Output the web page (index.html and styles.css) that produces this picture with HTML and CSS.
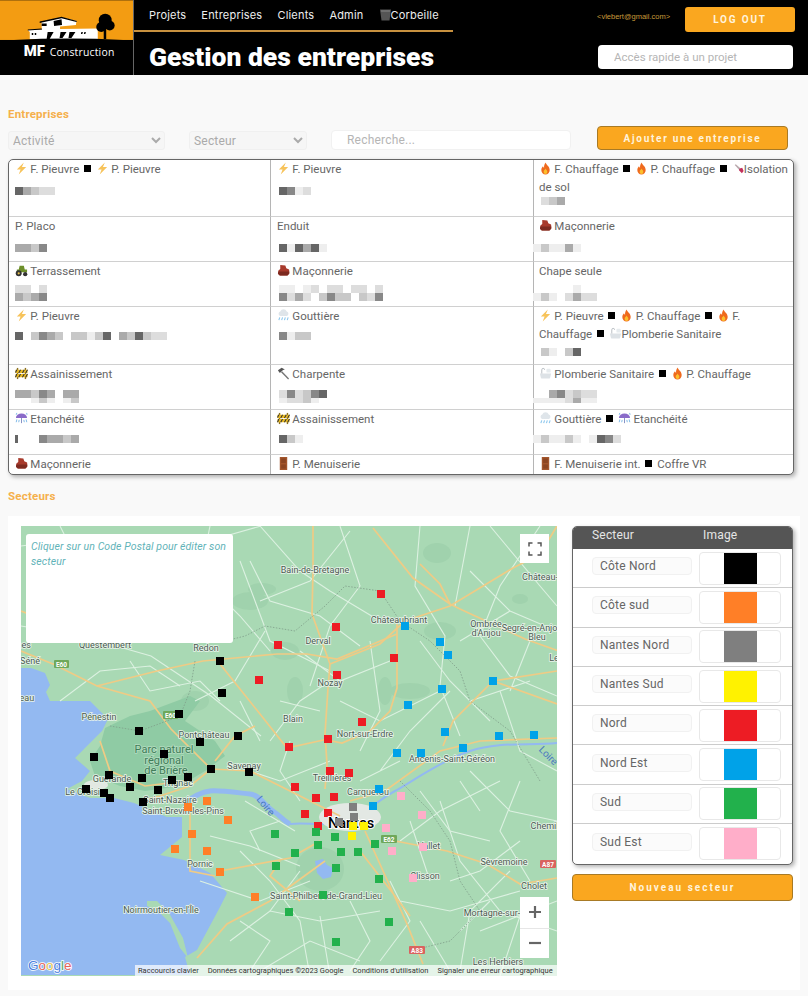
FILE: index.html
```html
<!DOCTYPE html>
<html lang="fr">
<head>
<meta charset="utf-8">
<title>Gestion des entreprises</title>
<link rel="stylesheet" href="styles.css">
</head>
<body>
<svg class="sprite" aria-hidden="true">
  <symbol id="i-bolt" viewBox="0 0 14 14"><path d="M9.5 0.5 2 8h4l-2 5.5L12 5.5H7.5z" fill="#f7c35a"/></symbol>
  <symbol id="i-fire" viewBox="0 0 14 14"><path d="M7 0.5c.6 2.500 4.500 4 4.500 8a4.500 5 0 0 1-9 0c0-2 1-3 1.800-4 .2 1 .6 1.500 1.200 1.800C5.200 4 6 2 7 .5z" fill="#ef6a1d"/><path d="M7 7c.4 1.200 2 1.800 2 3.500a2 2.500 0 0 1-4 0C5 9 6.500 8.500 7 7z" fill="#fbc02d"/></symbol>
  <symbol id="i-brick" viewBox="0 0 14 14"><path d="M3.500 1 9 1.500l1 3 3 1.500.5 4-2 2.500H3L1 10.500 1.500 7l2-1.500z" fill="#a83a2c"/><path d="M1.500 8h11.500v2.500l-2 2H3l-2-2z" fill="#7d2a20"/></symbol>
  <symbol id="i-tractor" viewBox="0 0 14 14"><path d="M5 2h4.500l1 4H13v3H2V6h2z" fill="#6d8f2a"/><circle cx="4" cy="10" r="3.200" fill="#333"/><circle cx="4" cy="10" r="1.200" fill="#e9c04a"/><circle cx="11" cy="11" r="2.300" fill="#333"/></symbol>
  <symbol id="i-rain" viewBox="0 0 14 14"><path d="M3.500 7.500a2.500 2.500 0 0 1 0-4.800 3.800 3.800 0 0 1 7 0 2.500 2.500 0 0 1 0 4.800z" fill="#dfe5ea"/><path d="M3 9l-1 3M6 9l-1 3M9 9l-1 3M12 9l-1 3" stroke="#8ec8ee" stroke-width="1.200" fill="none"/></symbol>
  <symbol id="i-bath" viewBox="0 0 14 14"><path d="M1 7h12l-1 4.500a1.500 1.500 0 0 1-1.500 1h-7A1.500 1.500 0 0 1 2 11.500z" fill="#dde2e6"/><path d="M3 7V3a1.500 1.500 0 0 1 3 0" fill="none" stroke="#b4babf" stroke-width="1"/><rect x="8" y="2" width="4.500" height="4" rx="1" fill="#e6ebee"/></symbol>
  <symbol id="i-barrier" viewBox="0 0 14 14"><rect x="2" y="1" width="1.500" height="12" fill="#8a6d1e"/><rect x="10.500" y="1" width="1.500" height="12" fill="#8a6d1e"/><rect x="0.500" y="3" width="13" height="3.500" fill="#e8b923"/><rect x="0.500" y="7.500" width="13" height="3.500" fill="#e8b923"/><path d="M2 3 .5 6M6 3 4 6.500M10 3 8 6.500M13.500 3l-2 3.500M2 7.500.5 11M6 7.500 4 11M10 7.500 8 11M13.500 7.500l-2 3.500" stroke="#333" stroke-width="1.100"/></symbol>
  <symbol id="i-hammer" viewBox="0 0 14 14"><path d="M5.500 4.500 13 12.500l-1 1L4.300 5.700z" fill="#777"/><path d="M1 3.500 5 .8l3.500 2-2 .5-2.800 2.700-1 .2z" fill="#555"/></symbol>
  <symbol id="i-umbrella" viewBox="0 0 14 14"><path d="M1 6.500a6 5 0 0 1 12 0z" fill="#8a6bc9"/><path d="M7 6.500V12" stroke="#7e8ac0" stroke-width="1"/><path d="M2 1l-.7 2M12.500 1l.5 2M2 8l-.7 3M12 8l.7 3M4.500 8.500l-.5 2.500M9.500 8.500l.5 2.500" stroke="#79b6e6" stroke-width="1"/></symbol>
  <symbol id="i-door" viewBox="0 0 14 14"><rect x="3" y="0" width="8" height="14" fill="#a3562c"/><rect x="4.500" y="1.500" width="5" height="5" fill="#8b4522"/><rect x="4.500" y="8" width="5" height="4.500" fill="#8b4522"/></symbol>
  <symbol id="i-iso" viewBox="0 0 14 14"><path d="M1 2l1.500-1L11 8.500 9 11z" fill="#b9a9ad"/><path d="M7.500 7.500l4-1.500 2 4.500-2.500 3-4-4z" fill="#c3305c"/></symbol>
</svg>

<header class="topbar">
  <div class="logo">
    <svg class="logo-art" viewBox="0 0 134 75" role="img" aria-label="MF Construction">
      <rect width="134" height="40" fill="#f39c12"/>
      <rect y="40" width="134" height="35" fill="#000"/>
      <path d="M28 30l14-.5V22l20-5 15 4-.500 4-16 1.500V29l38-.5V39H30V32z" fill="#fff"/>
      <path d="M54 21l8-2 .5 6-8 1zM40 21.500l22-5 15.500 4.300-.5 1-15-3.800-22 5zM28 29.500l14-1 .5 1-14.500 1z" fill="#000"/>
      <path d="M47 39l1-7h6l-4 7zM60 38l1-6h6l-4 6zM69 38l1-6h6l-4 6zM32 33h1.500v2H32zM35 33h1.500v2H35zM82 32h1.500l-.5 2H81.500zM85 32h1.500l-.5 2h-1.500zM42 23.500h5v2.500h-5z" fill="#000"/>
      <circle cx="106" cy="20" r="6.500" fill="#000"/><circle cx="110.500" cy="25.500" r="5" fill="#000"/><circle cx="102" cy="27" r="5" fill="#000"/>
      <rect x="104.500" y="27" width="2.500" height="12" fill="#000"/>
      <path d="M14 40q55-3 110 0z" fill="#000"/>
      <text class="logo-mf" x="24" y="56">MF</text>
      <text class="logo-c" x="50" y="56">Construction</text>
    </svg>
  </div>
  <div class="head-mid">
    <nav class="nav">
      <a>Projets</a><a>Entreprises</a><a>Clients</a><a>Admin</a>
      <a class="nav-trash"><svg class="trash" viewBox="0 0 11 12"><path d="M0 .5h11l-1.500 11h-8z" fill="#555"/><path d="M1 2h9" stroke="#888"/></svg>Corbeille</a>
    </nav>
    <h1>Gestion des entreprises</h1>
  </div>
  <div class="head-right">
    <div class="account"><span class="email">&lt;vlebert@gmail.com&gt;</span><button class="logout">LOG OUT</button></div>
    <input class="quick" placeholder="Accès rapide à un projet">
  </div>
</header>

<main class="main">
  <h2>Entreprises</h2>
  <div class="filters">
    <select class="sel sel-a"><option>Activité</option></select>
    <select class="sel sel-b"><option>Secteur</option></select>
    <input class="search" placeholder="Recherche...">
    <button class="add">Ajouter une entreprise</button>
  </div>

  <div class="grid">
    <div class="cell"><svg class="ic"><use href="#i-bolt"/></svg> F. Pieuvre <i class="sq"></i> <svg class="ic"><use href="#i-bolt"/></svg> P. Pieuvre
      <div class="mos"><div class="mr"><b class="g6"></b><b class="g4"></b><b class="g3"></b><b class="g2"></b><b class="g2"></b></div></div></div>
    <div class="cell c2"><svg class="ic"><use href="#i-bolt"/></svg> F. Pieuvre
      <div class="mos"><div class="mr"><b class="g6"></b><b class="g5"></b><b class="g1"></b><b class="g2"></b></div></div></div>
    <div class="cell c3"><svg class="ic"><use href="#i-fire"/></svg> F. Chauffage <i class="sq"></i> <svg class="ic"><use href="#i-fire"/></svg> P. Chauffage <i class="sq"></i> <svg class="ic ic-n"><use href="#i-iso"/></svg>Isolation de sol
      <div class="mos mos-tiny"><div class="mr"><b class="g2"></b><b class="g3"></b><b class="g4"></b></div></div></div>

    <div class="cell">P. Placo
      <div class="mos"><div class="mr"><b class="g4"></b><b class="g4"></b><b class="g3"></b><b class="g5"></b></div></div></div>
    <div class="cell c2">Enduit
      <div class="mos"><div class="mr"><b class="g6"></b><b class="g1"></b><b class="g6"></b><b class="g4"></b><b class="g6"></b><b class="g1"></b></div></div></div>
    <div class="cell c3"><svg class="ic"><use href="#i-brick"/></svg> Maçonnerie
      <div class="mos"><div class="mr"><b class="g1"></b><b class="g3"></b><b class="g1"></b><b class="g1"></b><b class="g4"></b><b class="g1"></b></div></div></div>

    <div class="cell"><svg class="ic"><use href="#i-tractor"/></svg> Terrassement
      <div class="mos mos-up"><div class="mr"><b class="g2"></b><b class="g2"></b><b></b><b class="g2"></b></div><div class="mr"><b class="g4"></b><b class="g3"></b><b class="g4"></b><b class="g5"></b></div></div></div>
    <div class="cell c2"><svg class="ic"><use href="#i-brick"/></svg> Maçonnerie
      <div class="mos mos-up"><div class="mr"><b class="g1"></b><b class="g1"></b><b></b><b class="g1"></b><b class="g2"></b><b></b><b class="g2"></b><b class="g2"></b><b></b><b class="g2"></b><b class="g2"></b><b></b><b class="g2"></b></div><div class="mr"><b class="g5"></b><b class="g2"></b><b class="g4"></b><b class="g2"></b><b></b><b class="g3"></b><b class="g5"></b><b class="g3"></b><b class="g3"></b><b></b><b class="g3"></b><b class="g2"></b><b class="g5"></b></div></div></div>
    <div class="cell c3">Chape seule
      <div class="mos mos-up"><div class="mr"><b></b><b></b><b></b><b></b><b></b><b class="g1"></b></div><div class="mr"><b class="g1"></b><b class="g3"></b><b class="g1"></b><b></b><b class="g2"></b><b class="g4"></b><b class="g2"></b><b class="g2"></b></div></div></div>

    <div class="cell"><svg class="ic"><use href="#i-bolt"/></svg> P. Pieuvre
      <div class="mos mos-m"><div class="mr"><b class="g6"></b><b></b><b class="g3"></b><b class="g5"></b><b class="g4"></b><b class="g3"></b><b></b><b class="g3"></b><b class="g3"></b><b class="g1"></b><b class="g3"></b><b class="g6"></b><b></b><b class="g4"></b><b class="g3"></b><b class="g6"></b><b class="g3"></b><b class="g2"></b><b class="g2"></b></div></div></div>
    <div class="cell c2"><svg class="ic"><use href="#i-rain"/></svg> Gouttière
      <div class="mos mos-m"><div class="mr"><b class="g5"></b><b class="g1"></b><b class="g3"></b><b class="g3"></b></div></div></div>
    <div class="cell c3"><svg class="ic"><use href="#i-bolt"/></svg> P. Pieuvre <i class="sq"></i> <svg class="ic"><use href="#i-fire"/></svg> P. Chauffage <i class="sq"></i> <svg class="ic"><use href="#i-fire"/></svg> F. Chauffage <i class="sq"></i> <svg class="ic"><use href="#i-bath"/></svg>Plomberie Sanitaire
      <div class="mos mos-low"><div class="mr"><b></b><b class="g3"></b><b class="g1"></b><b></b><b class="g3"></b><b class="g6"></b></div></div></div>

    <div class="cell"><svg class="ic"><use href="#i-barrier"/></svg> Assainissement
      <div class="mos mos-m"><div class="mr"><b class="g4"></b><b class="g4"></b><b class="g3"></b><b class="g5"></b><b class="g4"></b><b></b><b class="g4"></b><b class="g4"></b></div><div class="mr mr-h"><b></b><b></b><b class="g1"></b><b class="g3"></b><b class="g1"></b><b></b><b class="g1"></b><b class="g3"></b></div></div></div>
    <div class="cell c2"><svg class="ic"><use href="#i-hammer"/></svg> Charpente
      <div class="mos mos-m"><div class="mr"><b class="g2"></b><b class="g5"></b><b class="g2"></b><b class="g3"></b><b class="g5"></b><b class="g6"></b></div><div class="mr mr-h"><b class="g1"></b><b class="g2"></b><b class="g2"></b><b class="g3"></b><b class="g1"></b><b></b></div></div></div>
    <div class="cell c3"><svg class="ic"><use href="#i-bath"/></svg> Plomberie Sanitaire <i class="sq"></i> <svg class="ic"><use href="#i-fire"/></svg> P. Chauffage
      <div class="mos mos-m"><div class="mr"><b></b><b></b><b class="g4"></b><b class="g5"></b><b class="g2"></b><b class="g3"></b><b class="g2"></b><b class="g2"></b></div><div class="mr mr-h"><b class="g1"></b><b class="g1"></b><b class="g1"></b><b class="g1"></b><b class="g2"></b><b class="g4"></b><b class="g1"></b><b class="g1"></b></div></div></div>

    <div class="cell"><svg class="ic"><use href="#i-umbrella"/></svg> Etanchéité
      <div class="mos mos-m"><div class="mr"><b class="g6 thin"></b><b></b><b></b><b class="g5"></b><b class="g4"></b><b class="g4"></b><b class="g3"></b><b class="g4"></b></div></div></div>
    <div class="cell c2"><svg class="ic"><use href="#i-barrier"/></svg> Assainissement
      <div class="mos mos-m"><div class="mr"><b class="g6"></b><b class="g3"></b><b class="g1"></b></div></div></div>
    <div class="cell c3"><svg class="ic"><use href="#i-rain"/></svg> Gouttière <i class="sq"></i> <svg class="ic"><use href="#i-umbrella"/></svg> Etanchéité
      <div class="mos mos-m"><div class="mr"><b class="g1"></b><b class="g3"></b><b class="g1"></b><b class="g1"></b><b class="g3"></b><b class="g1"></b><b></b><b class="g1"></b><b class="g6"></b><b class="g5"></b><b class="g2"></b></div></div></div>

    <div class="cell"><svg class="ic"><use href="#i-brick"/></svg> Maçonnerie</div>
    <div class="cell c2"><svg class="ic"><use href="#i-door"/></svg> P. Menuiserie</div>
    <div class="cell c3"><svg class="ic"><use href="#i-door"/></svg> F. Menuiserie int. <i class="sq"></i> Coffre VR</div>
  </div>

  <h2 class="h2-sect">Secteurs</h2>
  <section class="panel">
    <div class="map">
      <svg class="map-art" viewBox="21 525 536 450" role="img" aria-label="Carte">
        <rect x="21" y="525" width="536" height="450" fill="#a9d9b4"/>
        <g fill="#a0d2ad">
          <ellipse cx="250" cy="600" rx="18" ry="9"/><ellipse cx="437" cy="552" rx="14" ry="10"/><ellipse cx="440" cy="630" rx="16" ry="9"/><ellipse cx="410" cy="690" rx="20" ry="8"/><ellipse cx="385" cy="690" rx="7" ry="14"/><ellipse cx="295" cy="690" rx="8" ry="14"/><ellipse cx="262" cy="588" rx="14" ry="6"/><ellipse cx="195" cy="700" rx="14" ry="10"/><ellipse cx="320" cy="868" rx="24" ry="22"/><ellipse cx="520" cy="598" rx="8" ry="5"/><ellipse cx="285" cy="650" rx="14" ry="9"/>
        </g>
        <path d="M105 727l25-12 20-5 40-15 10 5-15 20 30 20 10 15-20 15-25 15-35 5-25-5-25-10-5-15 10-15z" fill="#8fcba4"/>
        <path d="M21 667h10l14 5 5 12-4 7 4 9h40l18 18-6 12-17 17-10 10 15 13-8 10-15 8 23 9h24l20 5 33 14h15v20l-22 18 24 5 26 13 17 20-7 14-23 43-12 7 5 18H21z" fill="#93b9f1"/>
        <path d="M147 900l10 0 12 12 14 25 5 20-8-10-10-25-12-12-11-5z" fill="#a9d9b4"/>
        <path d="M183 803c8-6 18-12 27-13s30 2 40 3 15 12 23 17 10 10 17 13" fill="none" stroke="#93b9f1" stroke-width="5"/>
        <path d="M290 823c20-2 40 4 60-5s30-20 45-28 45-30 75-40 60-5 87-8" fill="none" stroke="#93b9f1" stroke-width="2"/>
        <path d="M315 860l8-2 4 6 6 3-2 9-8 2-6-6z" fill="#93b9f1"/>
        <ellipse cx="350" cy="816" rx="31" ry="14" fill="#e3e8e4"/>
        <ellipse cx="96" cy="784" rx="12" ry="5" fill="#e2e8e2"/>
        <g class="roads-w">
          <path d="M21 545l60-8 60 15 60-10 60-17M60 525l30 60 40 40 60 10M150 540l30 60-20 40M210 525l-10 50 40 40 30 35M260 525l40 45 30 20 50 30M340 525l20 60-30 40-20 60M420 525l-5 60 30 50 -5 50 20 50M470 525l-15 80M490 525l50 60 17 20M470 570l40 40 47 20M540 525l-40 60-20 50 30 40 47 20M420 640l30 40 40 40M370 640l10 70-20 40M450 690l-40 40-30 40M500 690l20 60 37 20M265 630l-30 50-40 20M240 560l30 80 60 30M21 625l60 10 70 20 60 40 50 40M60 700l40-30 50-5 30 20M130 660l20 30 50-10 20 20M270 740l30-40 30-20M250 770l30 10 50-20M300 800l-20-30 10-30M400 760l-40 20M500 780l-60 30-40 30M470 770l40 40 47 10M440 800l20 60 40 50 57 20M520 780l-20 50 30 50M400 900l50 10 70-20M380 960l30-40-20-40M430 880l-20-60M460 970l10-60 40-40M240 850l30 30 30 40 10 55M200 880l60 20 50-20M230 940l40-30 50 10 60-10M260 970l50-30 50 20M330 975l-10-60M480 930l77-30M500 975l20-60M245 800l50 30M210 835l40 10 50 20"/>
          <path d="M250 560l20 40 50 15 40 30M350 530l-40 50-50 20M300 650l40 30 50-20M340 700l40 20 60-30M460 640l50-30M470 700l60-20M530 640l-20 50M280 700l40 10M240 700l20 40M420 790l30 40 40 10M460 780l20 30M520 840l-40 30-30 10M260 850l-10-20 30-10M240 920l30 20 -20 30M420 920l30 50M350 900l20 40-20 30M490 900l-30 30M300 870l-30 40"/>
        </g>
        <g class="roads-y">
          <path d="M313 525v45l-1 43 18 50-2 24-3 46 2 30-2 25"/>
          <path d="M397 623v64l-7 23-20 20-28 12-15-3M405 620l45-15 63-38 27-14 17-28"/>
          <path d="M373 527l40 50 37 26 10 5 65 30 42 15M493 680l64-10M493 680l64 23M493 680l-40 40-10 25"/>
          <path d="M350 800l35-10 55-40 40-10 77-3"/>
          <path d="M385 838l62 12 40 13 33 20 37-6M365 830l42 93 16 40M360 850l35 45 15 20"/>
          <path d="M340 815l-50-25-40-20-39-2-21 17-30 10-20 5M211 768l-40-40-21-28-53-15-44-22-32-13"/>
          <path d="M97 685l60-15 46-10 74-7 30 0 30 5 60-25"/>
          <path d="M220 663l40 50 27 34 41-9M215 760l20-25 20-10"/>
          <path d="M320 840l-30 17-70 13M325 860l-55 40-43 23-30 34M190 810v60l25 5"/>
          <path d="M100 740l10 30 35 15 40-5M300 900l-30-25 10-15M21 610l40 15 40 5"/>
          <path d="M450 603l-10-20-20-20M330 663l50-20 25-23"/>
        </g>
        <g class="borders">
          <path d="M225 640l20-5 20-10 30 5 30-25 20-20 35 5 20 30 30 20 30 30 10 30 40 30 30 50M400 780l30 30 20 30 10 40 20 30-30 30-40 10"/>
          <path d="M195 660l-5 30-10 25-40 15-30-5"/>
        </g>
        <g class="shield">
          <rect x="54" y="659" width="15" height="8" rx="1"/><rect x="163" y="710" width="15" height="8" rx="1"/><rect x="381" y="834" width="16" height="8" rx="1"/>
        </g>
        <g class="shield-t">
          <text x="61.500" y="666">E60</text><text x="170.500" y="717">E60</text><text x="389" y="841">E62</text>
        </g>
        <g class="shield-r">
          <rect x="540" y="859" width="16" height="8" rx="1"/><rect x="409" y="945" width="16" height="8" rx="1"/>
        </g>
        <g class="shield-t">
          <text x="548" y="866">A87</text><text x="417" y="952">A83</text>
        </g>
        <g class="lbl">
          <text x="315" y="572">Bain-de-Bretagne</text><text x="399" y="622">Châteaubriant</text><text x="486" y="626">Ombrée</text><text x="486" y="635">d'Anjou</text><text x="532" y="630">Segré-en-Anjou</text><text x="537" y="639">Bleu</text><text x="540" y="579">Château-</text><text x="318" y="643">Derval</text><text x="330" y="685">Nozay</text><text x="293" y="721">Blain</text><text x="365" y="736">Nort-sur-Erdre</text><text x="452" y="761">Ancenis-Saint-Géréon</text><text x="206" y="650">Redon</text><text x="105" y="647">Questembert</text><text x="99" y="719">Pénestin</text><text x="204" y="737">Pontchâteau</text><text x="244" y="768">Savenay</text><text x="112" y="781">Guérande</text><text x="85" y="794">Le Croisic</text><text x="178" y="785">Trignac</text><text x="170" y="802">Saint-Nazaire</text><text x="183" y="813">Saint-Brevin-les-Pins</text><text x="200" y="866">Pornic</text><text x="161" y="912">Noirmoutier-en-l'Île</text><text x="326" y="898">Saint-Philbert-de-Grand-Lieu</text><text x="332" y="780">Treillières</text><text x="368" y="794">Carquefou</text><text x="429" y="848">Vallet</text><text x="425" y="878">Clisson</text><text x="504" y="864">Sèvremoine</text><text x="534" y="888">Cholet</text><text x="503" y="915">Mortagne-sur-Sèvre</text><text x="498" y="964">Les Herbiers</text><text x="548" y="828">Chemillé</text><text x="554" y="660">Le</text><text x="16" y="647">Vannes</text><text x="30" y="663">Séné</text><text x="18" y="700">Sarzeau</text>
        </g>
        <g class="lbl lbl-park"><text x="164" y="752">Parc naturel</text><text x="164" y="763">régional</text><text x="166" y="773">de Brière</text></g>
        <text class="lbl-water" transform="translate(263 807) rotate(50)">Loire</text>
        <text class="lbl-water" transform="translate(546 757) rotate(45)">Loire</text>
        <g fill="#000">
          <rect x="216" y="656" width="8" height="8"/><rect x="218" y="688" width="8" height="8"/><rect x="175" y="709" width="8" height="8"/><rect x="135" y="726" width="8" height="8"/><rect x="234" y="731" width="8" height="8"/><rect x="196" y="737" width="8" height="8"/><rect x="160" y="749" width="8" height="8"/><rect x="90" y="752" width="8" height="8"/><rect x="207" y="764" width="8" height="8"/><rect x="245" y="767" width="8" height="8"/><rect x="105" y="770" width="8" height="8"/><rect x="138" y="773" width="8" height="8"/><rect x="168" y="775" width="8" height="8"/><rect x="184" y="772" width="8" height="8"/><rect x="126" y="782" width="8" height="8"/><rect x="82" y="784" width="8" height="8"/><rect x="154" y="785" width="8" height="8"/><rect x="100" y="788" width="8" height="8"/><rect x="106" y="793" width="8" height="8"/><rect x="139" y="797" width="8" height="8"/>
        </g>
        <g fill="#ed1c24">
          <rect x="274" y="640" width="8" height="8"/><rect x="255" y="675" width="8" height="8"/><rect x="285" y="742" width="8" height="8"/><rect x="377" y="589" width="8" height="8"/><rect x="332" y="622" width="8" height="8"/><rect x="390" y="653" width="8" height="8"/><rect x="333" y="670" width="8" height="8"/><rect x="358" y="717" width="8" height="8"/><rect x="324" y="734" width="8" height="8"/><rect x="326" y="766" width="8" height="8"/><rect x="345" y="768" width="8" height="8"/><rect x="291" y="782" width="8" height="8"/><rect x="312" y="793" width="8" height="8"/><rect x="330" y="792" width="8" height="8"/><rect x="301" y="809" width="8" height="8"/><rect x="324" y="808" width="8" height="8"/><rect x="314" y="821" width="8" height="8"/>
        </g>
        <g fill="#00a2e8">
          <rect x="401" y="621" width="8" height="8"/><rect x="436" y="637" width="8" height="8"/><rect x="444" y="650" width="8" height="8"/><rect x="489" y="676" width="8" height="8"/><rect x="438" y="684" width="8" height="8"/><rect x="404" y="700" width="8" height="8"/><rect x="441" y="727" width="8" height="8"/><rect x="495" y="731" width="8" height="8"/><rect x="530" y="730" width="8" height="8"/><rect x="459" y="743" width="8" height="8"/><rect x="393" y="748" width="8" height="8"/><rect x="417" y="748" width="8" height="8"/><rect x="375" y="784" width="8" height="8"/><rect x="369" y="801" width="8" height="8"/>
        </g>
        <g fill="#ff7f27">
          <rect x="203" y="796" width="8" height="8"/><rect x="184" y="802" width="8" height="8"/><rect x="224" y="815" width="8" height="8"/><rect x="188" y="829" width="8" height="8"/><rect x="171" y="844" width="8" height="8"/><rect x="203" y="846" width="8" height="8"/><rect x="216" y="867" width="8" height="8"/><rect x="251" y="892" width="8" height="8"/>
        </g>
        <g fill="#22b14c">
          <rect x="271" y="829" width="8" height="8"/><rect x="272" y="861" width="8" height="8"/><rect x="285" y="907" width="8" height="8"/><rect x="312" y="827" width="8" height="8"/><rect x="331" y="832" width="8" height="8"/><rect x="314" y="840" width="8" height="8"/><rect x="371" y="839" width="8" height="8"/><rect x="291" y="848" width="8" height="8"/><rect x="337" y="847" width="8" height="8"/><rect x="354" y="847" width="8" height="8"/><rect x="332" y="863" width="8" height="8"/><rect x="375" y="874" width="8" height="8"/><rect x="319" y="890" width="8" height="8"/><rect x="385" y="917" width="8" height="8"/><rect x="332" y="937" width="8" height="8"/>
        </g>
        <g fill="#ffaec9">
          <rect x="397" y="791" width="8" height="8"/><rect x="418" y="810" width="8" height="8"/><rect x="382" y="823" width="8" height="8"/><rect x="419" y="842" width="8" height="8"/><rect x="388" y="846" width="8" height="8"/><rect x="409" y="873" width="8" height="8"/>
        </g>
        <text class="lbl-city" x="351" y="827">Nantes</text>
        <g fill="#7f7f7f">
          <rect x="349" y="802" width="8" height="8"/><rect x="350" y="812" width="8" height="8"/><rect x="335" y="817" width="8" height="8"/>
        </g>
        <g fill="#fff200">
          <rect x="349" y="821" width="8" height="8"/><rect x="360" y="821" width="8" height="8"/><rect x="348" y="831" width="8" height="8"/>
        </g>
        <text class="g-logo" x="28" y="969"><tspan fill="#4a7fe0">G</tspan><tspan fill="#e4645a">o</tspan><tspan fill="#e6c34e">o</tspan><tspan fill="#4a7fe0">g</tspan><tspan fill="#55a868">l</tspan><tspan fill="#e4645a">e</tspan></text>
      </svg>
      <div class="info">Cliquer sur un Code Postal pour éditer son secteur</div>
      <button class="map-btn full" aria-label="Plein écran"><svg viewBox="0 0 14 14"><path d="M1 4.500V1h3.500M9.500 1H13v3.500M13 9.500V13H9.500M4.500 13H1V9.500" fill="none" stroke="#555" stroke-width="1.500"/></svg></button>
      <div class="zoomer">
        <button class="zoom-b" aria-label="Zoom avant"><svg viewBox="0 0 14 14"><path d="M7 1v12M1 7h12" stroke="#666" stroke-width="2.200"/></svg></button>
        <button class="zoom-b" aria-label="Zoom arrière"><svg viewBox="0 0 14 14"><path d="M1 7h12" stroke="#666" stroke-width="2.200"/></svg></button>
      </div>
      <div class="attrib">
        <span>Raccourcis clavier</span><span>Données cartographiques ©2023 Google</span><span>Conditions d'utilisation</span><span>Signaler une erreur cartographique</span>
      </div>
    </div>
    <aside class="side">
      <div class="sect">
        <div class="sect-head"><span class="sh1">Secteur</span><span class="sh2">Image</span></div>
        <div class="sect-row"><input class="sect-in" value="Côte Nord"><div class="img-btn"><span class="sw sw-black"></span></div></div>
        <div class="sect-row"><input class="sect-in" value="Côte sud"><div class="img-btn"><span class="sw sw-orange"></span></div></div>
        <div class="sect-row"><input class="sect-in" value="Nantes Nord"><div class="img-btn"><span class="sw sw-gray"></span></div></div>
        <div class="sect-row"><input class="sect-in" value="Nantes Sud"><div class="img-btn"><span class="sw sw-yellow"></span></div></div>
        <div class="sect-row"><input class="sect-in" value="Nord"><div class="img-btn"><span class="sw sw-red"></span></div></div>
        <div class="sect-row"><input class="sect-in" value="Nord Est"><div class="img-btn"><span class="sw sw-blue"></span></div></div>
        <div class="sect-row"><input class="sect-in" value="Sud"><div class="img-btn"><span class="sw sw-green"></span></div></div>
        <div class="sect-row"><input class="sect-in" value="Sud Est"><div class="img-btn"><span class="sw sw-pink"></span></div></div>
      </div>
      <button class="new">Nouveau secteur</button>
    </aside>
  </section>
</main>
</body>
</html>
```

FILE: styles.css
```css
* { box-sizing: border-box; }
html, body { margin: 0; height: 996px; overflow: hidden; }
body { background: #f9f9f9; font-family: Roboto, "Liberation Sans", sans-serif; color: #666; }
.sprite { position: absolute; width: 0; height: 0; }

/* header */
.topbar { display: flex; height: 75px; background: #000; }
.logo { width: 134px; flex: none; border-right: 1px solid #666; }
.logo-art { display: block; width: 133px; height: 75px; }
.logo-mf { font: 900 15px Roboto, sans-serif; fill: #fff; }
.logo-c { font: 500 10.500px "Open Sans", sans-serif; fill: #fff; letter-spacing: .2px; }
.head-mid { width: 319px; flex: none; }
.nav { display: flex; align-items: flex-start; gap: 15px; height: 32px; padding: 8px 0 0 15px; border-bottom: 2px solid #c8913f; font: 400 11px/15px Inter, sans-serif; letter-spacing: .2px; color: #eee; }
.nav-trash { display: flex; align-items: center; margin-left: 1px; }
.trash { width: 11px; height: 12px; margin-top: -1px; }
h1 { margin: 9px 0 0 15px; font: 900 26.500px/32px Roboto, sans-serif; color: #fff; white-space: nowrap; }
.head-right { flex: 1; padding: 7px 13px 0 144px; }
.account { display: flex; align-items: center; }
.email { width: 88px; margin-bottom: 7px; font: 7.500px "Liberation Sans", sans-serif; color: #c89a3a; white-space: nowrap; }
.logout { width: 110px; height: 25px; border: 0; border-radius: 3px; background: #faa71f; color: #fff3dc; font: 700 10px Roboto, sans-serif; letter-spacing: 1.800px; }
.quick { display: block; width: 195px; height: 24px; margin: 13px 0 0 1px; padding: 0 16px; border: 0; border-radius: 4px; background: #fff; font: 11.500px Roboto, sans-serif; }
.quick::placeholder { color: #b5b5b5; opacity: 1; }

/* main */
.main { padding: 0 8px; }
h2 { margin: 32px 0 0; font: 700 11.500px/15px Roboto, sans-serif; color: #f5b04c; letter-spacing: .2px; }
.h2-sect { margin-top: 14px; }
.filters { display: flex; align-items: flex-end; margin-top: 4px; height: 24px; }
.sel { height: 19px; padding: 0; border: 1px solid #f0f0f0; border-radius: 3px; background: #f6f6f6; color: #aaa; font: 12px Roboto, sans-serif; letter-spacing: .2px; }
.sel-a { width: 157px; }
.sel-b { width: 118px; margin-left: 24px; }
.search { width: 240px; height: 20px; margin-left: 24px; padding: 0 15px; border: 1px solid #f1f1f1; border-radius: 4px; background: #fff; font: 12px Roboto, sans-serif; letter-spacing: .2px; }
.search::placeholder { color: #b5b5b5; opacity: 1; }
.add { width: 191px; height: 24px; margin-left: 26px; border: 1px solid #a87a25; border-radius: 4px; background: #faa71f; color: #fff3dc; font: 700 10px Roboto, sans-serif; letter-spacing: 1.700px; }

/* company grid */
.grid { display: grid; grid-template-columns: 261px 263px 1fr; grid-template-rows: 57px 45px 45px 58px 45px 45px 20px; width: 786px; height: 316px; margin-top: 9px; border: 1px solid #666; border-radius: 5px; background: #fff; box-shadow: 2px 2px 4px rgba(0,0,0,.3); overflow: hidden; }
.cell { padding: 1px 0 0 6px; border-bottom: 1px solid #d0d0d0; font-size: 11.500px; line-height: 17.500px; color: #666; }
.cell:nth-last-child(-n+3) { border-bottom: 0; }
.c2, .c3 { border-left: 1px solid #b5b5b5; }
.c3 { padding-left: 5px; }
.ic { width: 13px; height: 13px; vertical-align: -2px; margin-right: -.5px; }
.ic-n { width: 10px; margin-left: 2px; margin-right: 0; }
.sq { display: inline-block; width: 7px; height: 7px; margin: 0 2px; background: #000; vertical-align: 1px; }
.mos { margin-top: 8px; }
.mos-up { margin-top: 4px; }
.mos-m { margin-top: 6px; }
.mos-low { margin-top: 5px; }
.mos-tiny { margin-top: 1px; }
.c2 .mos { margin-left: 2px; }
.c3 .mos { margin-left: -6px; }
.c3 .mos-tiny { margin-left: 2px; }
.mr { display: flex; height: 8px; }
.mr-h { height: 5px; }
.mr b { width: 8px; flex: none; }
.mr .thin { width: 3px; margin-right: 5px; }
.g1 { background: #eee; }
.g2 { background: #ddd; }
.g3 { background: #c8c8c8; }
.g4 { background: #aaa; }
.g5 { background: #888; }
.g6 { background: #666; }

/* sectors */
.panel { display: flex; gap: 15px; width: 792px; height: 474px; margin-top: 12px; padding: 10px 7px 0 13px; background: #fff; }
.map { position: relative; width: 536px; height: 450px; flex: none; overflow: hidden; }
.map-art { display: block; width: 536px; height: 450px; }
.roads-w path { fill: none; stroke: #dcf1e1; stroke-width: 1.100; }
.roads-y path { fill: none; stroke: #efcb85; stroke-width: 1.700; }
.borders path { fill: none; stroke: #7f9d89; stroke-width: .8; stroke-dasharray: 1.500 1.500; }
.shield rect { fill: #6fa85a; }
.shield-r rect { fill: #d9635f; }
.shield-t text { font: 700 6.500px Roboto, sans-serif; fill: #fff; text-anchor: middle; }
.lbl text { font: 400 9px Roboto, sans-serif; fill: #4a5a50; text-anchor: middle; stroke: #e8f4ea; stroke-width: 1.600px; paint-order: stroke; }
.lbl-park text { font-size: 11px; fill: #3f7d58; stroke: #b4dcc0; }
.lbl-water { font: 400 10px Roboto, sans-serif; fill: #4a78c0; text-anchor: middle; }
.lbl-city { font: 500 14.500px Roboto, sans-serif; fill: #000; text-anchor: middle; stroke: #fff; stroke-width: 2px; paint-order: stroke; }
.g-logo { font: 400 13.500px "Liberation Sans", sans-serif; stroke: #fff; stroke-width: 1.500px; paint-order: stroke; }
.info { position: absolute; left: 5px; top: 8px; width: 207px; height: 109px; padding: 6px 5px; border-radius: 3px; background: #fff; color: #5fb3b8; font: italic 400 10.500px/14.500px Roboto, sans-serif; letter-spacing: .1px; }
.map-btn { position: absolute; right: 8px; top: 8px; display: flex; align-items: center; justify-content: center; width: 29px; height: 29px; padding: 0; border: 0; background: #fff; }
.map-btn svg { width: 14px; height: 14px; }
.zoomer { position: absolute; right: 8px; bottom: 18px; width: 29px; background: #fff; }
.zoom-b { display: flex; align-items: center; justify-content: center; width: 29px; height: 30.500px; padding: 0; border: 0; background: #fff; }
.zoom-b svg { width: 14px; height: 14px; }
.zoom-b + .zoom-b { border-top: 1px solid #e6e6e6; }
.attrib { position: absolute; right: 0; bottom: 0; display: flex; gap: 9px; width: 422px; height: 11px; padding-left: 3px; background: rgba(255,255,255,.7); color: #333; font: 7.500px/11px Roboto, sans-serif; white-space: nowrap; }

.side { width: 221px; flex: none; }
.sect { height: 339px; border: 1px solid #666; border-radius: 5px; background: #fff; box-shadow: 2px 2px 4px rgba(0,0,0,.3); overflow: hidden; }
.sect-head { display: flex; height: 22px; background: #555; color: #e6e6e6; font-size: 12px; line-height: 17px; letter-spacing: .2px; }
.sh1 { width: 130px; padding-left: 19px; }
.sect-row { display: flex; align-items: center; height: 39.300px; padding-left: 19px; border-bottom: 1px solid #ccc; }
.sect-row:last-child { border-bottom: 0; }
.sect-in { width: 100px; height: 18px; margin-bottom: 4px; padding: 0 7px; border: 1px solid #f1f1f1; border-radius: 4px; background: #fbfbfb; color: #666; font: 12px Roboto, sans-serif; letter-spacing: .2px; }
.img-btn { display: flex; justify-content: center; width: 82px; height: 33px; margin-left: 7px; border: 1px solid #e8e8e8; border-radius: 4px; background: #fff; overflow: hidden; }
.sw { display: block; width: 33px; height: 100%; }
.sw-black { background: #000; }
.sw-orange { background: #ff7f27; }
.sw-gray { background: #7f7f7f; }
.sw-yellow { background: #fff200; }
.sw-red { background: #ed1c24; }
.sw-blue { background: #00a2e8; }
.sw-green { background: #22b14c; }
.sw-pink { background: #ffaec9; }
.new { display: block; width: 221px; height: 27px; margin-top: 9px; border: 1px solid #a87a25; border-radius: 4px; background: #faa71f; color: #fff3dc; font: 700 10px Roboto, sans-serif; letter-spacing: 2px; }
```
